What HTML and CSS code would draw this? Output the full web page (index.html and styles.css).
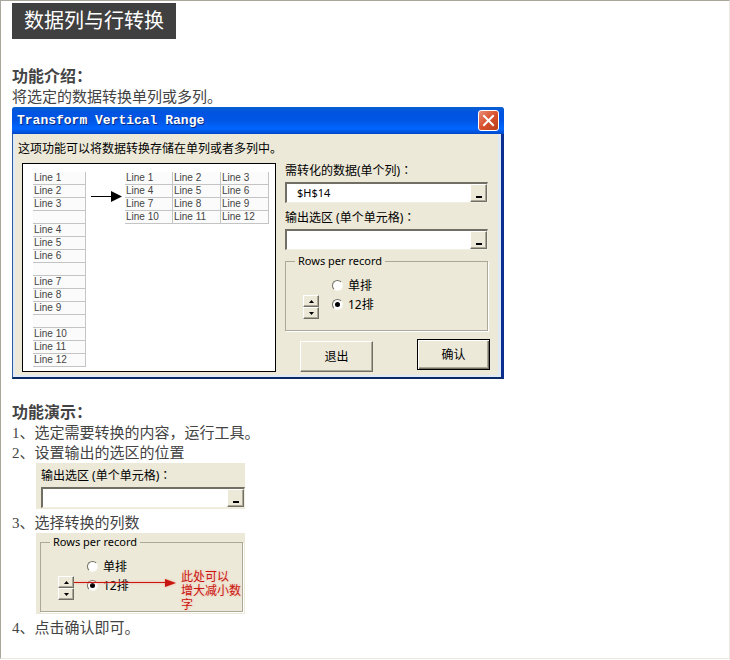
FILE: index.html
```html
<!DOCTYPE html>
<html lang="zh-CN">
<head>
<meta charset="utf-8">
<title>数据列与行转换</title>
<link rel="stylesheet" href="styles.css">
</head>
<body>
<main class="page">
  <h1 class="title">数据列与行转换</h1>

  <section class="section">
    <h2 class="heading">功能介绍：</h2>
    <p class="text">将选定的数据转换单列或多列。</p>

    <div class="dialog" role="group" aria-labelledby="dialog-title">
      <div class="titlebar">
        <span id="dialog-title">Transform Vertical Range</span>
        <button class="close" type="button" aria-label="关闭">
          <svg width="13" height="13" viewBox="0 0 13 13"><path d="M2 2l9 9M11 2l-9 9" stroke="#fff" stroke-width="2" stroke-linecap="square"/></svg>
        </button>
      </div>
      <div class="dialog-body">
        <p class="note">这项功能可以将数据转换存储在单列或者多列中。</p>
        <div class="columns">
          <div class="preview">
            <table class="cells source">
              <tr><td>Line 1</td></tr>
              <tr><td>Line 2</td></tr>
              <tr><td>Line 3</td></tr>
              <tr><td></td></tr>
              <tr><td>Line 4</td></tr>
              <tr><td>Line 5</td></tr>
              <tr><td>Line 6</td></tr>
              <tr><td></td></tr>
              <tr><td>Line 7</td></tr>
              <tr><td>Line 8</td></tr>
              <tr><td>Line 9</td></tr>
              <tr><td></td></tr>
              <tr><td>Line 10</td></tr>
              <tr><td>Line 11</td></tr>
              <tr><td>Line 12</td></tr>
            </table>
            <svg class="arrow" width="31" height="11" viewBox="0 0 31 11"><path d="M0 5h22v1H0z"/><path d="M20 0l11 5.500-11 5.500z"/></svg>
            <table class="cells result">
              <tr><td>Line 1</td><td>Line 2</td><td>Line 3</td></tr>
              <tr><td>Line 4</td><td>Line 5</td><td>Line 6</td></tr>
              <tr><td>Line 7</td><td>Line 8</td><td>Line 9</td></tr>
              <tr><td>Line 10</td><td>Line 11</td><td>Line 12</td></tr>
            </table>
          </div>

          <form class="form">
            <label class="label" for="source">需转化的数据(单个列)<span class="colon" lang="zh-TW">：</span></label>
            <div class="field">
              <input id="source" type="text" value="$H$14">
              <button type="button" aria-label="选择数据"></button>
            </div>
            <label class="label" for="target">输出选区 (单个单元格)<span class="colon" lang="zh-TW">：</span></label>
            <div class="field">
              <input id="target" type="text">
              <button type="button" aria-label="选择输出"></button>
            </div>
            <fieldset class="group">
              <legend>Rows per record</legend>
              <div class="group-body">
                <div class="spinner">
                  <button type="button" aria-label="增大"><svg width="5" height="3" viewBox="0 0 5 3"><path d="M0 3L2.500 0L5 3z"/></svg></button>
                  <button type="button" aria-label="减小"><svg width="5" height="3" viewBox="0 0 5 3"><path d="M0 0L2.500 3L5 0z"/></svg></button>
                </div>
                <div class="options">
                  <label><input type="radio" name="rows">单排</label>
                  <label><input type="radio" name="rows" checked>12排</label>
                </div>
              </div>
            </fieldset>
            <div class="actions">
              <button class="button" type="button">退出</button>
              <button class="button default" type="button">确认</button>
            </div>
          </form>
        </div>
      </div>
    </div>
  </section>

  <section class="section">
    <h2 class="heading">功能演示：</h2>
    <p class="text">1、选定需要转换的内容，运行工具。</p>
    <p class="text">2、设置输出的选区的位置</p>
    <div class="panel">
      <label class="label" for="demo-target">输出选区 (单个单元格)<span class="colon" lang="zh-TW">：</span></label>
      <div class="field">
        <input id="demo-target" type="text">
        <button type="button" aria-label="选择输出"></button>
      </div>
    </div>
    <p class="text">3、选择转换的列数</p>
    <div class="panel panel-group">
      <fieldset class="group">
        <legend>Rows per record</legend>
        <div class="group-body">
          <div class="spinner">
            <button type="button" aria-label="增大"><svg width="5" height="3" viewBox="0 0 5 3"><path d="M0 3L2.500 0L5 3z"/></svg></button>
            <button type="button" aria-label="减小"><svg width="5" height="3" viewBox="0 0 5 3"><path d="M0 0L2.500 3L5 0z"/></svg></button>
          </div>
          <div class="options">
            <label><input type="radio" name="demo-rows">单排</label>
            <label><input type="radio" name="demo-rows" checked>12排</label>
          </div>
        </div>
      </fieldset>
      <svg class="callout-arrow" width="102" height="8" viewBox="0 0 102 8" fill="#c8150f"><path d="M0 3h94v1H0z"/><path d="M91 0l11 4-11 4z"/></svg>
      <p class="callout">此处可以<br>增大减小数<br>字</p>
    </div>
    <p class="text">4、点击确认即可。</p>
  </section>
</main>
</body>
</html>
```
FILE: styles.css
```css
* {
  box-sizing: border-box;
}

body {
  margin: 0;
  background: #fff;
  color: #444;
  font-family: "Liberation Serif", "Noto Sans CJK SC", serif;
  font-size: 15px;
  line-height: 20px;
}

h1, h2, p {
  margin: 0;
}

button, input {
  font: inherit;
  color: inherit;
}

svg {
  display: block;
}

.page {
  min-height: 659px;
  padding: 2px 11px 20px;
  border: 1px solid #a9a79c;
  border-right-color: #ece9e0;
  border-bottom-color: #ece9e0;
}

.title {
  width: fit-content;
  padding: 0 12px;
  background: #404040;
  color: #fff;
  font-size: 20px;
  font-weight: 400;
  line-height: 36px;
}

.section {
  margin-top: 28px;
}

.section + .section {
  margin-top: 24px;
}

.heading {
  font-size: 16px;
  font-weight: 700;
  line-height: 20px;
}

/* Dialog window */

.dialog {
  max-width: 492px;
  border: 1px solid #2a5a9c;
  border-top: 0;
  border-right: 3px solid #0b2f8f;
  border-bottom: 2px solid #0a2a66;
  border-radius: 4px 4px 0 0;
  background: #ece9d8;
  color: #000;
  font-family: "Noto Sans", "Noto Sans CJK SC", sans-serif;
  font-size: 12px;
  line-height: 16px;
}

.titlebar {
  display: flex;
  align-items: center;
  justify-content: space-between;
  height: 27px;
  margin: 0 -3px 0 -1px;
  padding: 0 5px;
  border-radius: 3px 3px 0 0;
  background: linear-gradient(#0a5fd0 0, #0054e0 20%, #0055e5 50%, #0066ff 80%, #0048c8 100%);
  color: #fff;
  font-family: "Liberation Mono", monospace;
  font-size: 13px;
  font-weight: 700;
  text-shadow: 1px 1px 0 #0a2a80;
}

.close {
  display: grid;
  place-items: center;
  width: 21px;
  height: 21px;
  padding: 0;
  border: 1px solid #fff;
  border-radius: 3px;
  background: linear-gradient(135deg, #e8917a, #d9502c 50%, #b8401e);
}

.dialog-body {
  padding: 7px 10px 3px 5px;
  border: 2px solid #dfe8f5;
  border-top: 0;
  border-right-width: 3px;
}

.note {
  margin-left: -2px;
}

.columns {
  display: flex;
  gap: 9px;
  padding: 6px 0 0 2px;
}

.preview {
  display: flex;
  flex: 0 1 254px;
  align-items: flex-start;
  height: 209px;
  padding: 8px 6px 0 10px;
  border: 1px solid #000;
  background: #fff;
}

.cells {
  border-spacing: 0;
  color: #444;
  font-family: "Liberation Sans", sans-serif;
  font-size: 10px;
  line-height: 12px;
}

.cells td {
  width: 48px;
  height: 13px;
  padding: 0 1px;
  border: 1px solid #c4c4c4;
  border-width: 0 1px 1px 0;
  background: #fbfbfb;
}

.source td {
  width: 53px;
}

.arrow {
  flex: none;
  margin: 19px 3px 0 5px;
}

.form {
  flex: 1;
  min-width: 0;
}

.label {
  display: block;
  height: 16px;
}

.colon {
  font-family: "Noto Sans CJK TC", sans-serif;
  line-height: 1;
}

/* Range picker */

.field {
  display: flex;
  height: 21px;
  margin: 3px 0 0;
  border: 2px solid #716f64;
  border-right: 1px solid #f1efe2;
  border-bottom: 1px solid #f1efe2;
  background: #fff;
}

.field + .label {
  margin-top: 7px;
}

.field input {
  flex: 1;
  min-width: 0;
  padding: 0 10px;
  border: 0;
  background: none;
  font-size: 11px;
}

.field button,
.spinner button,
.button {
  border: 1px solid;
  border-color: #fff #716f64 #716f64 #fff;
  box-shadow: inset -1px -1px 0 #aca899;
  background: #ece9d8;
}

.field button {
  display: flex;
  align-items: flex-end;
  justify-content: center;
  width: 17px;
  padding: 0 0 3px;
}

.field button::after {
  content: "";
  width: 6px;
  height: 2px;
  background: #000;
}

/* Option group */

.group {
  min-width: 0;
  margin: 0;
  padding: 8px 9px 11px;
  border: 1px solid #aca899;
  box-shadow: 1px 1px 0 #fff;
}

.field + .group {
  margin-top: 4px;
}

.group legend {
  padding: 0 3px;
  font-size: 11px;
  line-height: 14px;
}

.group-body {
  display: flex;
  gap: 13px;
  padding-left: 8px;
}

.spinner {
  display: grid;
  width: 16px;
  height: 24px;
  margin-top: 19px;
}

.spinner button {
  display: grid;
  place-items: center;
  padding: 0;
}

.options label {
  display: flex;
  align-items: center;
  gap: 5px;
  height: 19px;
}

.options input {
  display: grid;
  place-items: center;
  width: 11px;
  height: 11px;
  margin: 0;
  border: 1px solid;
  border-color: #716f64 #f8f7f0 #f8f7f0 #716f64;
  border-radius: 50%;
  background: #fff;
  appearance: none;
}

.options input:checked::before {
  content: "";
  width: 5px;
  height: 5px;
  border-radius: 50%;
  background: #000;
}

.actions {
  display: flex;
  justify-content: space-between;
  padding: 8px 0 0 15px;
  margin-right: -2px;
}

.button {
  width: 73px;
  height: 31px;
  margin-top: 2px;
  padding: 0;
}

.button.default {
  margin: 0;
  border-color: #000;
  box-shadow: inset 1px 1px 0 #fff, inset -1px -1px 0 #716f64, inset -2px -2px 0 #aca899;
}

/* Demonstration panels */

.panel {
  position: relative;
  max-width: 209px;
  margin: 0 0 4px 24px;
  padding: 5px 0 1px 5px;
  background: #ece9d8;
  color: #000;
  font-family: "Noto Sans", "Noto Sans CJK SC", sans-serif;
  font-size: 12px;
  line-height: 16px;
}

.panel-group {
  padding: 2px 2px 2px 4px;
}

.callout-arrow {
  position: absolute;
  top: 46px;
  left: 38px;
  filter: drop-shadow(0 0 1px #f0a090);
}

.callout {
  position: absolute;
  top: 37px;
  left: 145px;
  color: #c8150f;
  line-height: 14px;
  text-shadow: 0 0 3px #f5b0a5;
  white-space: nowrap;
}
```
